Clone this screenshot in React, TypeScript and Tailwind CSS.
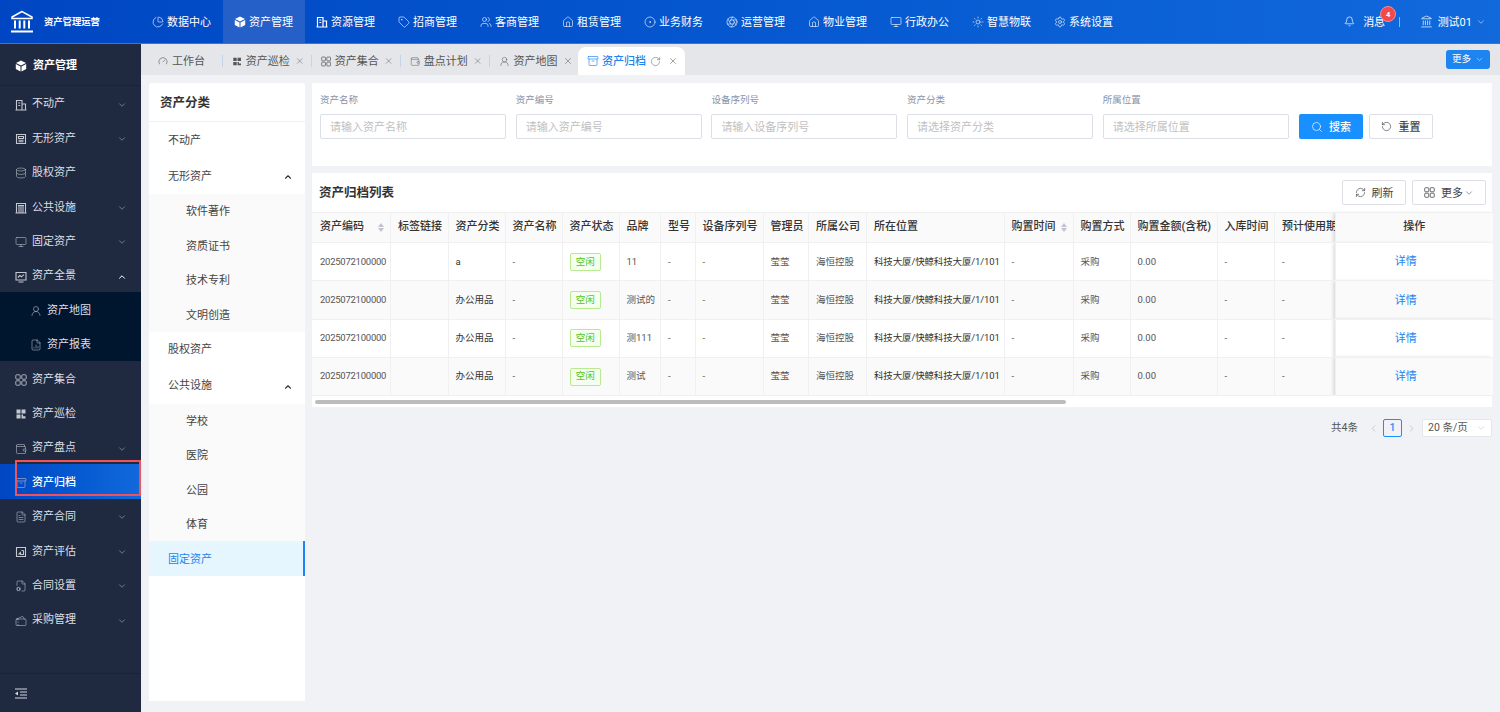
import React from "react";
import {
    Archive, Bell, ChartPie, ChevronDown, ChevronLeft, ChevronRight, ChevronUp, CircleDot,
    Database, FileChartColumn, FileCog, FileText, Gauge, House, Landmark, Monitor, RefreshCw, RotateCw,
    Search, Settings, Sun, Tag, Tickets, UserRound, Users, Wallet, X, Aperture,
} from "lucide-react";

type IconProps = { size?: number; strokeWidth?: number; className?: string; fill?: string };
type Icon = React.ComponentType<IconProps>;

// small helper for the icons lucide has no close match for
const drawn = (children: React.ReactNode): Icon => ({ size = 12, strokeWidth = 1.3, className }) => (
    <svg width={size} height={size} viewBox="0 0 12 12" fill="none" stroke="currentColor" strokeWidth={strokeWidth} className={className}>
        {children}
    </svg>
);

const BlocksIcon = drawn(
    <>
        <path d="M1.5 1.5h4v4h-4zM6.5 1.5h4v4h-4zM1.5 6.5h4v4h-4z" fill="currentColor" stroke="none" />
        <path d="M6.5 6.5h1.6v1.8h2.4v2.2h-4z" fill="currentColor" stroke="none" />
    </>
);
const RealEstateIcon = drawn(<path d="M1.5 11V1.5h5.5V11M7 5h3.5v6M0.5 11h11M3.3 4h2M3.3 6.5h2" />);
const IntangibleIcon = drawn(<path d="M1.5 1.5h9v9h-9zM3.5 3.5h5v2h-5zM3.5 7.2h5M3.5 8.8h5" />);
const FacilityIcon = drawn(<path d="M1.5 11V1.5h9V11M0.5 11h11M4 4v7M6 4v7M8 4v7M3 3.5h6" />);
const PanoramaIcon = drawn(<path d="M1 1.5h10v7.5H1zM3.5 11h5M2.8 6.5l2-2 1.6 1.3L9 3.6" />);
const EvaluateIcon = drawn(<path d="M1.5 1.5h9v9h-9zM3.5 8.5l2-2v2h3V4.5M6.5 4.5h2" />);
const GridIcon = drawn(
    <g strokeWidth="0.85">
        <rect x="0.8" y="0.8" width="4.4" height="4.4" rx="0.8" />
        <rect x="6.8" y="0.8" width="4.4" height="4.4" rx="0.8" />
        <rect x="0.8" y="6.8" width="4.4" height="4.4" rx="0.8" />
        <rect x="6.8" y="6.8" width="4.4" height="4.4" rx="0.8" />
    </g>
);
const BoxSolid: Icon = ({ size = 12 }) => (
    <svg width={size} height={size} viewBox="0 0 12 12">
        <path d="M6 .5 11 3 6 5.5 1 3z" fill="white" />
        <path d="M.8 4v5l4.7 2.5v-5zM11.2 4v5l-4.7 2.5v-5z" fill="white" />
    </svg>
);

const topNav: [string, Icon][] = [
    ["数据中心", ChartPie],
    ["资产管理", BoxSolid],
    ["资源管理", RealEstateIcon],
    ["招商管理", Tag],
    ["客商管理", Users],
    ["租赁管理", House],
    ["业务财务", CircleDot],
    ["运营管理", Aperture],
    ["物业管理", House],
    ["行政办公", Monitor],
    ["智慧物联", Sun],
    ["系统设置", Settings],
];

const sideMenu: { label: string; icon: Icon; arrow?: "down" | "up"; sub?: boolean; active?: boolean }[] = [
    { label: "不动产", icon: RealEstateIcon, arrow: "down" },
    { label: "无形资产", icon: IntangibleIcon, arrow: "down" },
    { label: "股权资产", icon: Database },
    { label: "公共设施", icon: FacilityIcon, arrow: "down" },
    { label: "固定资产", icon: Monitor, arrow: "down" },
    { label: "资产全景", icon: PanoramaIcon, arrow: "up" },
    { label: "资产地图", icon: UserRound, sub: true },
    { label: "资产报表", icon: FileChartColumn, sub: true },
    { label: "资产集合", icon: GridIcon },
    { label: "资产巡检", icon: BlocksIcon },
    { label: "资产盘点", icon: Wallet, arrow: "down" },
    { label: "资产归档", icon: Archive, active: true },
    { label: "资产合同", icon: FileText, arrow: "down" },
    { label: "资产评估", icon: EvaluateIcon, arrow: "down" },
    { label: "合同设置", icon: FileCog, arrow: "down" },
    { label: "采购管理", icon: Tickets, arrow: "down" },
];

const tabs: [string, Icon][] = [
    ["资产巡检", BlocksIcon],
    ["资产集合", GridIcon],
    ["盘点计划", Wallet],
    ["资产地图", UserRound],
];

const columns: { label: string; width: number; sort?: boolean }[] = [
    { label: "资产编码", width: 78.5, sort: true },
    { label: "标签链接", width: 57.5 },
    { label: "资产分类", width: 57 },
    { label: "资产名称", width: 57 },
    { label: "资产状态", width: 57 },
    { label: "品牌", width: 41.5 },
    { label: "型号", width: 34.5 },
    { label: "设备序列号", width: 68 },
    { label: "管理员", width: 45.5 },
    { label: "所属公司", width: 58 },
    { label: "所在位置", width: 137.5 },
    { label: "购置时间", width: 69, sort: true },
    { label: "购置方式", width: 57 },
    { label: "购置金额(含税)", width: 87 },
    { label: "入库时间", width: 57.5 },
    { label: "预计使用期限", width: 61 },
];

const rows = [
    { category: "a", brand: "11" },
    { category: "办公用品", brand: "测试的" },
    { category: "办公用品", brand: "测111" },
    { category: "办公用品", brand: "测试" },
];

const filters: [string, string][] = [
    ["资产名称", "请输入资产名称"],
    ["资产编号", "请输入资产编号"],
    ["设备序列号", "请输入设备序列号"],
    ["资产分类", "请选择资产分类"],
    ["所属位置", "请选择所属位置"],
];

function Logo() {
    return (
        <svg width="24" height="23" viewBox="0 0 24 23" fill="none" stroke="white" strokeWidth="1.5">
            <path d="M12 1.5 2 7v1.5h20V7z" />
            <path d="M5 10.5v8M9.7 10.5v8M14.3 10.5v8M19 10.5v8" strokeWidth="2" />
            <path d="M1 21.5h22" strokeWidth="2" />
        </svg>
    );
}

function SortArrows() {
    return (
        <span className="flex flex-col gap-[1px]">
            <span className="w-0 h-0 border-x-[3px] border-x-transparent border-b-[4px] border-b-[#c0c4cc]" />
            <span className="w-0 h-0 border-x-[3px] border-x-transparent border-t-[4px] border-t-[#c0c4cc]" />
        </span>
    );
}

function TopBar() {
    return (
        <header className="h-[44px] shrink-0 flex items-center text-white bg-gradient-to-r from-[#0046c3] to-[#1169dc] border-b border-[#2a7be0]">
            <div className="w-[141px] shrink-0 flex items-center pl-[10px] gap-[10px]">
                <Logo />
                <span className="text-[9.3px] font-bold">资产管理运营</span>
            </div>
            {topNav.map(([label, NavIcon], i) => (
                <div key={label} className={`w-[82px] h-full flex items-center pl-[11px] gap-[3px] text-[11px] ${i === 1 ? "bg-[#2460c8]" : ""}`}>
                    <NavIcon size={12} strokeWidth={1.2} />
                    <span className="pt-[4px]">{label}</span>
                </div>
            ))}
            <div className="ml-auto flex items-center h-full">
                <div className="relative flex items-center gap-[8px] text-[11px]">
                    <Bell size={11} strokeWidth={1.5} />
                    <span className="pt-[4px]">消息</span>
                    <span className="absolute left-[36px] top-[-5px] w-[16px] h-[16px] rounded-full bg-[#f04a4a] border border-[#ff8a8a] flex items-center justify-center text-[7.5px] font-bold">4</span>
                </div>
                <span className="ml-[14px] w-px h-[10px] bg-[#8db6ee]" />
                <Landmark size={13} strokeWidth={1.3} className="ml-[19.5px]" />
                <span className="ml-[5px] pt-[3px] text-[11px]">测试01</span>
                <ChevronDown size={10} strokeWidth={1.2} className="ml-[4px] mr-[14px]" />
            </div>
        </header>
    );
}

function Sidebar() {
    return (
        <aside className="w-[141px] shrink-0 bg-[#1f2940] flex flex-col text-[#dcdfe5] text-[11px] relative">
            <div className="h-[42px] pt-[3px] shrink-0 flex items-center pl-[15px] gap-[6px] border-b border-[#1a2336] text-white font-bold">
                <BoxSolid size={12} />
                <span>资产管理</span>
            </div>
            <nav className="flex-1">
                {sideMenu.map(({ label, icon: MenuIcon, arrow, sub, active }) => (
                    <div
                        key={label}
                        className={`h-[34.4px] pt-[3px] flex items-center ${sub ? "pl-[30px] bg-[#00152e]" : "pl-[15px]"} ${active ? "bg-gradient-to-r from-[#0046c3] to-[#1169dc] text-white" : ""} pr-[14px] gap-[5px]`}
                    >
                        <MenuIcon size={12} strokeWidth={1.1} className="text-[#c3c7d0]" />
                        <span className={active ? "font-medium" : ""}>{label}</span>
                        {arrow === "down" && <ChevronDown size={10} strokeWidth={1.8} className="ml-auto text-[#8b92a2]" />}
                        {arrow === "up" && <ChevronUp size={10} strokeWidth={2.4} className="ml-auto text-white" />}
                    </div>
                ))}
            </nav>
            <div className="h-[39px] shrink-0 flex items-center pl-[15px] border-t border-[#1a2336]">
                <svg width="12" height="11" viewBox="0 0 12 11" stroke="#d5d8de" strokeWidth="1.2">
                    <path d="M0 1h12M5 4h7M5 7h7M0 10h12" />
                    <path d="M3 3.5v4L0 5.5z" fill="#d5d8de" stroke="none" />
                </svg>
            </div>
            <div className="absolute left-[15px] right-0 top-[416px] h-[35.5px] border-[2.5px] border-[#f0525a]" />
        </aside>
    );
}

function TabBar() {
    return (
        <div className="h-[31px] shrink-0 bg-[#e4e6e9] flex items-end pl-[17px] text-[11px] text-[#555] relative whitespace-nowrap">
            <div className="h-[28px] flex items-center">
                <Gauge size={10} strokeWidth={1.4} />
                <span className="ml-[4px] pt-[2px]">工作台</span>
                <span className="ml-[17px] w-px h-[12px] bg-[#c5d3e6]" />
            </div>
            {tabs.map(([label, TabIcon], i) => (
                <div key={label} className="w-[89px] shrink-0 h-[28px] flex items-center pl-[9px]">
                    <TabIcon size={11} strokeWidth={1.1} />
                    <span className="ml-[3.5px] pt-[2px]">{label}</span>
                    <X size={10} strokeWidth={1.4} className="ml-[5px] text-[#666]" />
                    {i < 3 && <span className="ml-[7px] w-px h-[12px] bg-[#c5d3e6]" />}
                </div>
            ))}
            <div className="ml-[-1px] w-[107px] shrink-0 h-[28px] bg-white rounded-t-[8px] flex items-center pl-[9px] text-[#1d84f0]">
                <Archive size={12} strokeWidth={1.3} />
                <span className="ml-[3px] pt-[2px] font-medium">资产归档</span>
                <RotateCw size={11} strokeWidth={1.2} className="ml-[4px] text-[#666]" />
                <X size={10} strokeWidth={1.4} className="ml-[7px] text-[#666]" />
            </div>
            <div className="absolute right-[10px] top-[6px] w-[44px] h-[19px] bg-[#1d84f0] rounded-[3px] flex items-center justify-center gap-[4px] text-white text-[9.5px]">
                <span>更多</span>
                <ChevronDown size={9} strokeWidth={1.3} />
            </div>
        </div>
    );
}

function CategoryRow({ label, h, sub, up, active }: { label: string; h: string; sub?: boolean; up?: boolean; active?: boolean }) {
    return (
        <div className={`${h} pt-[3px] flex items-center justify-between ${sub ? "pl-[37px] bg-[#fafafa]" : "pl-[19px]"} pr-[12px] ${active ? "bg-[#e6f6ff] text-[#1d84f0] border-r-2 border-[#1d84f0]" : "text-[#444]"}`}>
            <span>{label}</span>
            {up && <ChevronUp size={10} strokeWidth={2.6} className="text-[#333]" />}
        </div>
    );
}

function CategoryPanel() {
    return (
        <section className="w-[156px] shrink-0 bg-white rounded-t-[3px] text-[11px]">
            <div className="h-[39px] pt-[3px] flex items-center pl-[11px] border-b border-[#f0f0f0] text-[12.5px] font-bold text-[#333]">资产分类</div>
            <CategoryRow label="不动产" h="h-[35px]" />
            <CategoryRow label="无形资产" h="h-[37px]" up />
            <CategoryRow label="软件著作" h="h-[34.4px]" sub />
            <CategoryRow label="资质证书" h="h-[34.4px]" sub />
            <CategoryRow label="技术专利" h="h-[34.4px]" sub />
            <CategoryRow label="文明创造" h="h-[34.4px]" sub />
            <CategoryRow label="股权资产" h="h-[35px]" />
            <CategoryRow label="公共设施" h="h-[37px]" up />
            <CategoryRow label="学校" h="h-[34.4px]" sub />
            <CategoryRow label="医院" h="h-[34.4px]" sub />
            <CategoryRow label="公园" h="h-[34.4px]" sub />
            <CategoryRow label="体育" h="h-[34.4px]" sub />
            <CategoryRow label="固定资产" h="h-[34.4px]" active />
        </section>
    );
}

function SearchCard() {
    return (
        <section className="h-[83px] bg-white pl-[8px] pt-[11px] flex gap-[9.7px] shrink-0">
            {filters.map(([label, placeholder]) => (
                <div key={label} className="w-[186px] shrink-0">
                    <div className="h-[20px] text-[9.5px] leading-[12px] text-[#8a93a8]">{label}</div>
                    <div className="h-[25px] pt-[3px] border border-[#dcdfe6] rounded-[2px] flex items-center pl-[9px] text-[11px] text-[#bfbfbf]">{placeholder}</div>
                </div>
            ))}
            <div className="ml-[0.5px] pt-[20px] flex gap-[6px] text-[11px]">
                <button className="w-[64px] h-[25px] bg-[#1890ff] text-white rounded-[2px] flex items-center justify-center gap-[6px]">
                    <Search size={12} strokeWidth={1.3} />
                    <span className="pt-[3px] font-medium">搜索</span>
                </button>
                <button className="w-[64px] h-[25px] border border-[#dcdfe6] text-[#444] rounded-[2px] flex items-center justify-center gap-[6px]">
                    <RotateCw size={11} strokeWidth={1.4} className="-scale-x-100" />
                    <span className="pt-[3px] font-medium">重置</span>
                </button>
            </div>
        </section>
    );
}

function AssetTable() {
    const cell = "border-r border-[#f0f0f0] pl-[7px] overflow-hidden whitespace-nowrap";
    const total = columns.reduce((sum, c) => sum + c.width, 0);
    return (
        <div className="relative">
            <table className="table-fixed border-collapse text-[9.5px] text-[#555]" style={{ width: total + 157 }}>
                <colgroup>
                    {columns.map((c) => <col key={c.label} style={{ width: c.width }} />)}
                    <col className="w-[157px]" />
                </colgroup>
                <thead>
                    <tr className="h-[30px] bg-[#fafafa] text-[11px] text-[#333] font-medium border-y border-[#f0f0f0]">
                        {columns.map((c, i) => (
                            <th key={c.label} className={`${cell} ${i === 0 ? "pl-[8px]" : ""} text-left font-medium`}>
                                <span className="flex items-center justify-between pr-[6px]">
                                    <span>{c.label}</span>
                                    {c.sort && <SortArrows />}
                                </span>
                            </th>
                        ))}
                        <th className="font-medium text-center shadow-[-3px_0_3px_rgba(0,0,0,0.12)] bg-[#fafafa]">操作</th>
                    </tr>
                </thead>
                <tbody>
                    {rows.map((r, i) => (
                        <tr key={i} className={`h-[38.3px] border-b border-[#f0f0f0] ${i % 2 ? "bg-[#fafafa]" : "bg-white"}`}>
                            <td className={`${cell} pl-[8px] tracking-[-0.25px]`}>2025072100000</td>
                            <td className={cell}></td>
                            <td className={`${cell} text-[#333]`}>{r.category}</td>
                            <td className={cell}>-</td>
                            <td className={cell}>
                                <span className="inline-flex w-[31.5px] h-[18px] items-center justify-center border border-[#b7eb8f] bg-[#f6ffed] text-[#52c41a] rounded-[2px]">空闲</span>
                            </td>
                            <td className={cell}>{r.brand}</td>
                            <td className={cell}>-</td>
                            <td className={cell}>-</td>
                            <td className={cell}>莹莹</td>
                            <td className={cell}>海恒控股</td>
                            <td className={`${cell} text-[#333] tracking-[-0.15px]`}>科技大厦/快鲸科技大厦/1/101</td>
                            <td className={cell}>-</td>
                            <td className={cell}>采购</td>
                            <td className={cell}>0.00</td>
                            <td className={cell}>-</td>
                            <td className={cell}>-</td>
                            <td className={`text-center pr-[17px] text-[11px] text-[#1d84f0] shadow-[-3px_0_3px_rgba(0,0,0,0.12)] ${i % 2 ? "bg-[#fafafa]" : "bg-white"}`}>
                                <span className="block pt-[2px]">详情</span>
                            </td>
                        </tr>
                    ))}
                </tbody>
            </table>
            <div className="h-[11px] bg-white flex items-center pl-[3px]">
                <div className="w-[751px] h-[4px] rounded-full bg-[#bcbcbc]" />
            </div>
        </div>
    );
}

function ListCard() {
    return (
        <section className="bg-white shrink-0">
            <div className="h-[39px] flex items-center pl-[7px] pr-[6px]">
                <h2 className="pt-[2px] text-[12.5px] font-bold text-[#333]">资产归档列表</h2>
                <div className="ml-auto flex gap-[6px] text-[11px] text-[#444]">
                    <button className="w-[64px] h-[25px] border border-[#dcdfe6] rounded-[2px] flex items-center justify-center gap-[6px]">
                        <RefreshCw size={11} strokeWidth={1.4} />
                        <span className="pt-[3px]">刷新</span>
                    </button>
                    <button className="w-[74px] h-[25px] border border-[#dcdfe6] rounded-[2px] flex items-center justify-center gap-[6px]">
                        <GridIcon size={11} />
                        <span className="flex items-center gap-[1px]"><span className="pt-[3px]">更多</span><ChevronDown size={10} strokeWidth={1.3} /></span>
                    </button>
                </div>
            </div>
            <AssetTable />
        </section>
    );
}

function Pagination() {
    return (
        <div className="h-[18px] mt-[5px] flex items-center justify-end text-[10.5px] text-[#555] shrink-0">
            <span>共4条</span>
            <ChevronLeft size={11} strokeWidth={1.2} className="ml-[10px] text-[#aaa]" />
            <span className="ml-[4px] w-[19px] h-[18px] border border-[#1890ff] rounded-[2px] text-[#1890ff] flex items-center justify-center font-medium">1</span>
            <ChevronRight size={11} strokeWidth={1.2} className="ml-[4px] text-[#aaa]" />
            <span className="ml-[5px] w-[70px] h-[18px] bg-white border border-[#e4e7ed] rounded-[2px] flex items-center justify-between pl-[5px] pr-[5px]">
                20 条/页
                <ChevronDown size={10} strokeWidth={1.2} className="text-[#bbb]" />
            </span>
        </div>
    );
}

export default function App() {
    return (
        <div className="w-[1500px] h-[712px] overflow-hidden flex flex-col bg-[#f0f2f5] font-['Roboto','Noto_Sans_CJK_SC',sans-serif]">
            <TopBar />
            <div className="flex-1 flex min-h-0">
                <Sidebar />
                <main className="flex-1 min-w-0 flex flex-col">
                    <TabBar />
                    <div className="flex-1 min-h-0 flex gap-[7px] pt-[8px] pl-[8px] pr-[8px] pb-[11px]">
                        <CategoryPanel />
                        <div className="flex-1 min-w-0 flex flex-col gap-[7px]">
                            <SearchCard />
                            <ListCard />
                            <Pagination />
                        </div>
                    </div>
                </main>
            </div>
        </div>
    );
}
